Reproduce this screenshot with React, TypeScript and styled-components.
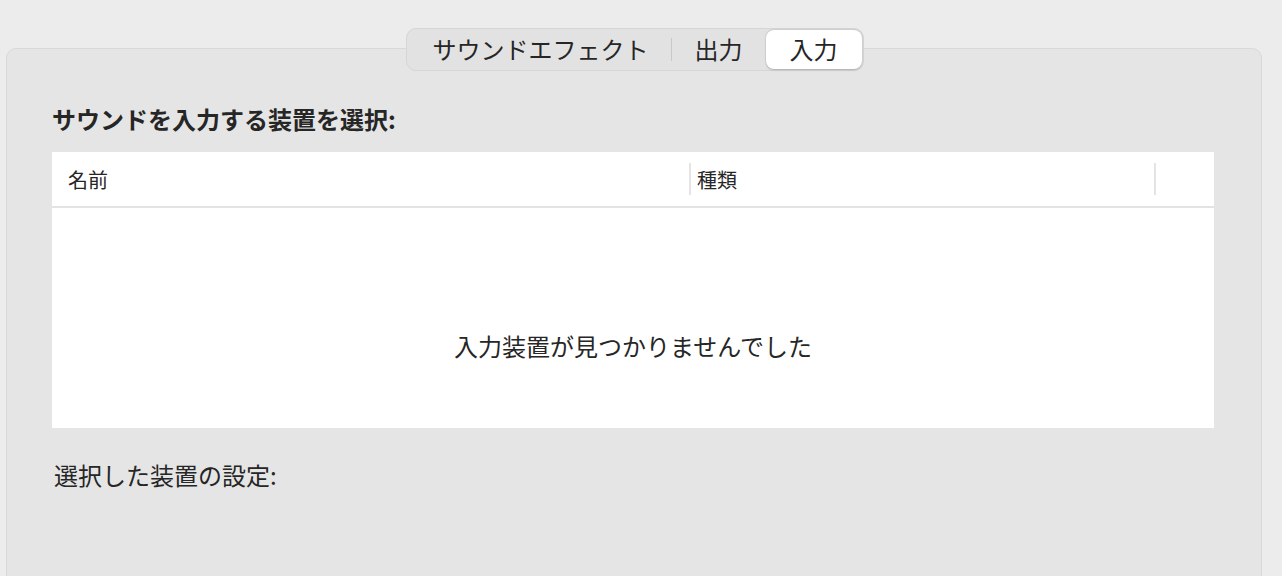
import React from "react";
import styled, { createGlobalStyle } from "styled-components";

const GlobalStyle = createGlobalStyle`
  html, body {
    margin: 0;
    padding: 0;
    background: #ececec;
  }
  body {
    font-family: "Noto Sans CJK JP", "Noto Sans", "Liberation Sans", sans-serif;
    color: #262626;
    overflow: hidden;
  }
`;

const Page = styled.div`
  width: 1282px;
  height: 576px;
  padding: 28px 20px 0 6px;
  box-sizing: border-box;
  overflow: hidden;
`;

const TabsRow = styled.div`
  display: flex;
  justify-content: center;
  position: relative;
  z-index: 1;
  margin-bottom: -23px;
  padding-left: 1px;
`;

const Segmented = styled.div`
  display: flex;
  align-items: center;
  height: 43px;
  box-sizing: border-box;
  padding: 1px;
  border: 1px solid #d6d6d6;
  border-radius: 10px;
  background: #e2e2e2;
`;

const Tab = styled.div<{ $active?: boolean; $padL: number; $padR: number }>`
  height: 39px;
  display: flex;
  align-items: center;
  padding: 0 ${(p) => p.$padR}px 1px ${(p) => p.$padL}px;
  box-sizing: border-box;
  border-radius: 8px;
  font-size: 24px;
  line-height: 1;
  color: #262626;
  background: ${(p) => (p.$active ? "#ffffff" : "transparent")};
  box-shadow: ${(p) =>
    p.$active ? "0 0.5px 2px rgba(0,0,0,0.22), 0 0 0 0.5px rgba(0,0,0,0.06)" : "none"};
`;

const TabDivider = styled.div`
  width: 1px;
  height: 23px;
  background: #c9c9c9;
`;

const Panel = styled.div`
  background: #e5e5e5;
  border: 1px solid #d9d9d9;
  border-radius: 10px;
  min-height: 560px;
  box-sizing: border-box;
  padding: 55px 47px 0 45px;
`;

const Title = styled.div`
  font-size: 24px;
  line-height: 29px;
  font-weight: 700;
  color: #262626;
  margin-bottom: 19px;
`;

const Table = styled.div`
  background: #ffffff;
  height: 276px;
  display: flex;
  flex-direction: column;
`;

const HeaderRow = styled.div`
  display: flex;
  align-items: center;
  height: 54px;
  border-bottom: 2px solid #e3e3e3;
  flex-shrink: 0;
`;

const HeaderCell = styled.div<{ $width?: number; $pad: number }>`
  ${(p) => (p.$width ? `width: ${p.$width}px;` : "flex: 1;")}
  padding-left: ${(p) => p.$pad}px;
  box-sizing: border-box;
  font-size: 20px;
  line-height: 24px;
  color: #262626;
  padding-top: 2px;
`;

const ColDivider = styled.div`
  width: 2px;
  height: 32px;
  background: #e4e4e4;
  flex-shrink: 0;
`;

const Body = styled.div`
  flex: 1;
  display: flex;
  justify-content: center;
  padding-top: 123px;
  box-sizing: border-box;
`;

const EmptyMessage = styled.div`
  font-size: 24px;
  line-height: 29px;
  color: #262626;
`;

const SectionLabel = styled.div`
  margin-top: 32px;
  padding-left: 2px;
  font-size: 24px;
  line-height: 29px;
  color: #262626;
`;

export default function App() {
  return (
    <>
      <GlobalStyle />
      <Page>
        <TabsRow>
          <Segmented>
            <Tab $padL={25} $padR={22}>サウンドエフェクト</Tab>
            <TabDivider />
            <Tab $padL={23} $padR={23}>出力</Tab>
            <Tab $active $padL={24} $padR={24}>入力</Tab>
          </Segmented>
        </TabsRow>
        <Panel>
          <Title>サウンドを入力する装置を選択:</Title>
          <Table>
            <HeaderRow>
              <HeaderCell $width={637} $pad={16}>名前</HeaderCell>
              <ColDivider />
              <HeaderCell $width={463} $pad={6}>種類</HeaderCell>
              <ColDivider />
              <HeaderCell $pad={0} />
            </HeaderRow>
            <Body>
              <EmptyMessage>入力装置が見つかりませんでした</EmptyMessage>
            </Body>
          </Table>
          <SectionLabel>選択した装置の設定:</SectionLabel>
        </Panel>
      </Page>
    </>
  );
}
